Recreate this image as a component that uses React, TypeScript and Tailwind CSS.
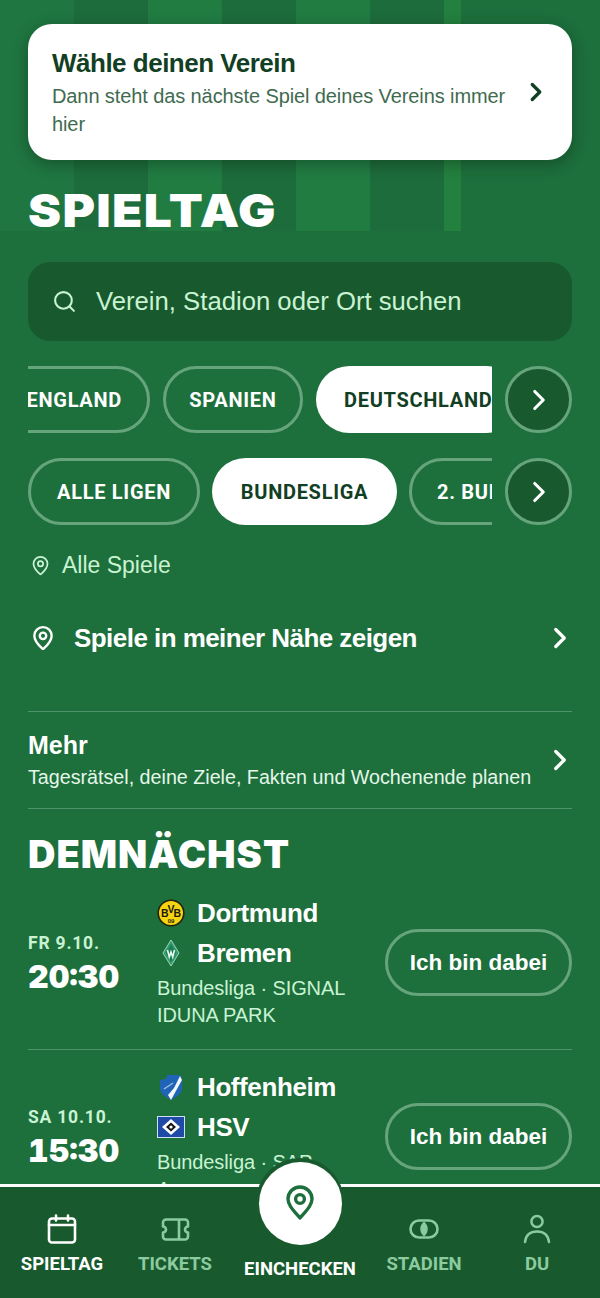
import { ChevronRight, Search, MapPin } from 'lucide-react';

const stripes = ['bg-[#1f7640]', 'bg-[#1d6c3b]', 'bg-[#217c42]', 'bg-[#1d6c3b]', 'bg-[#217c42]', 'bg-[#1d6c3b]', 'bg-[#23803f]'];

function Chip({ label, active, className = '' }: { label: string; active?: boolean; className?: string }) {
  return (
    <div
      className={`shrink-0 h-[67px] pt-[1px] rounded-full flex items-center font-['Roboto',sans-serif] font-bold text-[20px] tracking-[0.7px] whitespace-nowrap ${
        active ? 'bg-white text-[#123f24]' : 'border-[3px] border-[#66a47c] text-white'
      } ${className}`}
    >
      {label}
    </div>
  );
}

function ScrollButton() {
  return (
    <div className="shrink-0 w-[67px] h-[67px] rounded-full bg-[#185a2d] border-[3px] border-[#66a47c] flex items-center justify-center text-white">
      <ChevronRight size={34} strokeWidth={2.2} />
    </div>
  );
}

function BvbLogo() {
  return (
    <svg width="28" height="28" viewBox="0 0 28 28">
      <circle cx="14" cy="14" r="12.8" fill="#f6d40f" stroke="#23210f" strokeWidth="1.6" />
      <g fontFamily="Liberation Sans" fontWeight="700" fill="#1a1a10" textAnchor="middle">
        <text x="7.8" y="17.5" fontSize="10.5">B</text>
        <text x="14" y="14" fontSize="10.5">V</text>
        <text x="20.2" y="17.5" fontSize="10.5">B</text>
        <text x="14" y="23.5" fontSize="6">09</text>
      </g>
    </svg>
  );
}

function WerderLogo() {
  return (
    <svg width="28" height="28" viewBox="0 0 28 28">
      <path d="M14 1 L22 14 L14 27 L6 14 Z" fill="#2f9a6b" stroke="#bfe9d2" strokeWidth="0.8" />
      <path d="M14 5 L19 14 L14 23 L9 14 Z" fill="#1f7d55" />
      <path d="M10.5 11 L12.3 18 L14 13 L15.7 18 L17.5 11" fill="none" stroke="#e6f7ee" strokeWidth="1.6" />
    </svg>
  );
}

function HoffenheimLogo() {
  return (
    <svg width="28" height="28" viewBox="0 0 28 28">
      <path d="M3 7 L9 6 L10 2 L23 2 L25 6 L25 15 C25 21 19 24 14 27 C9 24 3 21 3 15 Z" fill="#2064b8" />
      <path d="M23 3 L25 7 L20 16 L14 27 L11 22 L17 15 Z" fill="#f4f7fb" />
      <path d="M7 16 L16 10" stroke="#9dc0ea" strokeWidth="1.4" />
    </svg>
  );
}

function HsvLogo() {
  return (
    <svg width="28" height="22" viewBox="0 0 28 22">
      <rect x="0.5" y="0.5" width="27" height="21" fill="#1f4aa8" stroke="#cfe0f0" />
      <path d="M14 3 L23 11 L14 19 L5 11 Z" fill="#ffffff" />
      <path d="M14 6.5 L19 11 L14 15.5 L9 11 Z" fill="#14141a" />
      <circle cx="14" cy="11" r="1.6" fill="#ffffff" />
    </svg>
  );
}

function MatchRow({
  day,
  time,
  home,
  away,
  homeLogo,
  awayLogo,
  place,
}: {
  day: string;
  time: string;
  home: string;
  away: string;
  homeLogo: React.ReactNode;
  awayLogo: React.ReactNode;
  place: string;
}) {
  return (
    <div className="flex items-center h-[174px] border-b border-[#4f9168]">
      <div className="w-[129px] shrink-0 pt-[3px]">
        <div className="font-['Roboto',sans-serif] font-bold text-[17.5px] tracking-[0.8px] text-[#c9f3d3] leading-[22px]">{day}</div>
        <div className="mt-[4px] font-['Inter',sans-serif] font-black tabular-nums text-[32px] text-white leading-[38px]">{time}</div>
      </div>
      <div className="w-[228px] shrink-0 self-start pt-[17px]">
        <div className="flex items-center h-[40px] gap-[12px]">
          <span className="w-[28px] flex justify-center">{homeLogo}</span>
          <span className="text-[26px] font-bold tracking-[-0.4px] text-white">{home}</span>
        </div>
        <div className="flex items-center h-[40px] gap-[12px]">
          <span className="w-[28px] flex justify-center">{awayLogo}</span>
          <span className="text-[26px] font-bold tracking-[-0.4px] text-white">{away}</span>
        </div>
        <div className="mt-[2px] w-[205px] text-[20px] tracking-[-0.1px] leading-[27px] text-[#c9f3d3]">{place}</div>
      </div>
      <div className="w-[187px] h-[67px] rounded-full border-[3px] border-[#66a47c] flex items-center justify-center text-[22.5px] font-bold text-white whitespace-nowrap">
        Ich bin dabei
      </div>
    </div>
  );
}

function NavItem({ label, active, children }: { label: string; active?: boolean; children: React.ReactNode }) {
  return (
    <div className={`flex flex-col items-center ${active ? 'text-white' : 'text-[#8ccb9f]'}`}>
      <div className="h-[32px] flex items-center justify-center">{children}</div>
      <div className="mt-[7px] font-['Roboto',sans-serif] font-bold text-[18.5px] leading-[24px] whitespace-nowrap">{label}</div>
    </div>
  );
}

export default function App() {
  return (
    <div className="relative w-[600px] h-[1298px] overflow-hidden bg-[#1d6f3c] font-['Liberation_Sans',sans-serif]">
      {/* pitch stripes behind the header */}
      <div className="absolute inset-x-0 top-0 h-[231px] flex">
        {stripes.map((c, i) => (
          <div key={i} className={`${c} ${i === 6 ? 'w-[17px]' : 'w-[74px]'}`} />
        ))}
      </div>

      <div className="relative px-[28px] pt-[24px]">
        {/* club picker */}
        <div className="h-[136px] rounded-[24px] bg-white pl-[24px] pr-[21px] flex items-center shadow-[0_4px_16px_rgba(0,0,0,0.3)]">
          <div className="flex-1">
            <div className="text-[26px] font-bold tracking-[-0.5px] text-[#123f24] leading-[32px]">Wähle deinen Verein</div>
            <div className="text-[20px] tracking-[-0.1px] text-[#3f6b50] leading-[28px] mt-[3px] w-[465px]">
              Dann steht das nächste Spiel deines Vereins immer hier
            </div>
          </div>
          <ChevronRight size={30} strokeWidth={2.6} className="text-[#123f24]" />
        </div>

        <h1 className="mt-[25px] origin-left scale-x-[1.08] font-['Inter',sans-serif] font-black text-[46px] tracking-[1.2px] leading-[50px] text-white">SPIELTAG</h1>

        {/* search */}
        <div className="mt-[27px] h-[79px] rounded-[22px] bg-[#185a2d] pl-[24px] flex items-center gap-[19px] text-[#c9f3d3]">
          <Search size={25} strokeWidth={2} />
          <span className="text-[25.7px]">Verein, Stadion oder Ort suchen</span>
        </div>

        {/* country chips */}
        <div className="mt-[25px] flex items-center gap-[13px]">
          <div className="w-[464px] overflow-hidden">
            <div className="flex gap-[13px] -ml-[32px]">
              <Chip label="ENGLAND" className="w-[154px] justify-end pr-[25px]" />
              <Chip label="SPANIEN" className="w-[140px] justify-center" />
              <Chip label="DEUTSCHLAND" active className="pl-[28px] pr-[28px]" />
            </div>
          </div>
          <ScrollButton />
        </div>

        {/* league chips */}
        <div className="mt-[25px] flex items-center gap-[13px]">
          <div className="w-[464px] overflow-hidden">
            <div className="flex gap-[12px]">
              <Chip label="ALLE LIGEN" className="w-[172px] justify-center" />
              <Chip label="BUNDESLIGA" active className="w-[185px] justify-center" />
              <Chip label="2. BUNDESLIGA" className="pl-[25px] pr-[25px]" />
            </div>
          </div>
          <ScrollButton />
        </div>

        <div className="mt-[25px] flex items-center gap-[11px] pl-[2px] text-[#c9f3d3]">
          <MapPin size={21} strokeWidth={2} />
          <span className="text-[23px] leading-[30px]">Alle Spiele</span>
        </div>

        <div className="mt-[40px] flex items-center justify-between text-white">
          <div className="flex items-center gap-[18px] pl-[2px]">
            <MapPin size={26} strokeWidth={2.2} />
            <span className="text-[26px] font-bold tracking-[-0.55px] leading-[36px]">Spiele in meiner Nähe zeigen</span>
          </div>
          <ChevronRight size={34} strokeWidth={2.3} className="-mr-[5px]" />
        </div>

        {/* more */}
        <div className="mt-[55px] h-[98px] border-y border-[#4f9168] flex items-center justify-between text-white">
          <div className="-mt-[1px]">
            <div className="text-[25px] font-bold leading-[32px]">Mehr</div>
            <div className="mt-[3px] text-[19.7px] leading-[26px] text-[#e4f7e9]">Tagesrätsel, deine Ziele, Fakten und Wochenende planen</div>
          </div>
          <ChevronRight size={34} strokeWidth={2.3} className="-mr-[5px]" />
        </div>

        <h2 className="mt-[23px] font-['Inter',sans-serif] font-black text-[38px] tracking-[1px] leading-[44px] text-white">DEMNÄCHST</h2>

        <div>
          <MatchRow
            day="FR 9.10."
            time="20:30"
            home="Dortmund"
            away="Bremen"
            homeLogo={<BvbLogo />}
            awayLogo={<WerderLogo />}
            place="Bundesliga · SIGNAL IDUNA PARK"
          />
          <MatchRow
            day="SA 10.10."
            time="15:30"
            home="Hoffenheim"
            away="HSV"
            homeLogo={<HoffenheimLogo />}
            awayLogo={<HsvLogo />}
            place="Bundesliga · SAP Arena"
          />
        </div>
      </div>

      {/* bottom tab bar */}
      <div className="absolute inset-x-0 bottom-0 h-[114px] bg-[#185a2d] border-t-[3px] border-white grid grid-cols-[124px_102px_148px_100px_126px] pt-[26px]">
        <NavItem label="SPIELTAG" active>
          <svg width="30" height="30" viewBox="0 0 30 30" fill="none" stroke="currentColor" strokeWidth="2.6" strokeLinecap="round" strokeLinejoin="round">
            <rect x="2" y="4.5" width="26" height="24" rx="3" />
            <path d="M2 11h26M9 1.5v5M21 1.5v5" />
          </svg>
        </NavItem>
        <NavItem label="TICKETS">
          <svg width="31" height="23" viewBox="0 0 31 23" fill="none" stroke="currentColor" strokeWidth="2.6" strokeLinejoin="round">
            <path d="M6 1.5h19a3 3 0 0 1 3 3v4a3 3 0 0 0 0 6v4a3 3 0 0 1-3 3H6a3 3 0 0 1-3-3v-4a3 3 0 0 0 0-6v-4a3 3 0 0 1 3-3z" />
            <path d="M19 1.5v20" />
          </svg>
        </NavItem>
        <div className="flex flex-col items-center text-white">
          <div className="font-['Roboto',sans-serif] font-bold text-[18.5px] leading-[24px] mt-[44px] whitespace-nowrap">EINCHECKEN</div>
        </div>
        <NavItem label="STADIEN">
          <svg width="30" height="20" viewBox="0 0 30 20" fill="none" stroke="currentColor" strokeWidth="2.6">
            <rect x="1.5" y="1.5" width="27" height="17" rx="8.5" />
            <path d="M15 2.5 C20 6.5 20 13.5 15 17.5 C10 13.5 10 6.5 15 2.5 Z" fill="currentColor" stroke="none" />
          </svg>
        </NavItem>
        <NavItem label="DU">
          <svg width="28" height="30" viewBox="0 0 28 30" fill="none" stroke="currentColor" strokeWidth="2.5" strokeLinecap="round">
            <circle cx="14" cy="7.5" r="5.6" />
            <path d="M2 28c1-8 6-10.5 12-10.5s11 2.5 12 10.5" />
          </svg>
        </NavItem>
      </div>

      {/* check-in button overlaps the bar */}
      <div className="absolute left-[256px] top-[1158px] w-[88px] h-[90px] rounded-full bg-[#185a2d] flex items-center justify-center">
        <div className="w-[83px] h-[83px] rounded-full bg-white flex items-center justify-center text-[#1d6f3c]">
          <svg width="30" height="36" viewBox="0 0 30 36" fill="none" stroke="currentColor" strokeWidth="3.4" strokeLinejoin="round">
            <path d="M15 33 C8 25 3 20 3 14 A12 12 0 0 1 27 14 C27 20 22 25 15 33 Z" />
            <circle cx="15" cy="14" r="4.4" />
          </svg>
        </div>
      </div>
    </div>
  );
}
